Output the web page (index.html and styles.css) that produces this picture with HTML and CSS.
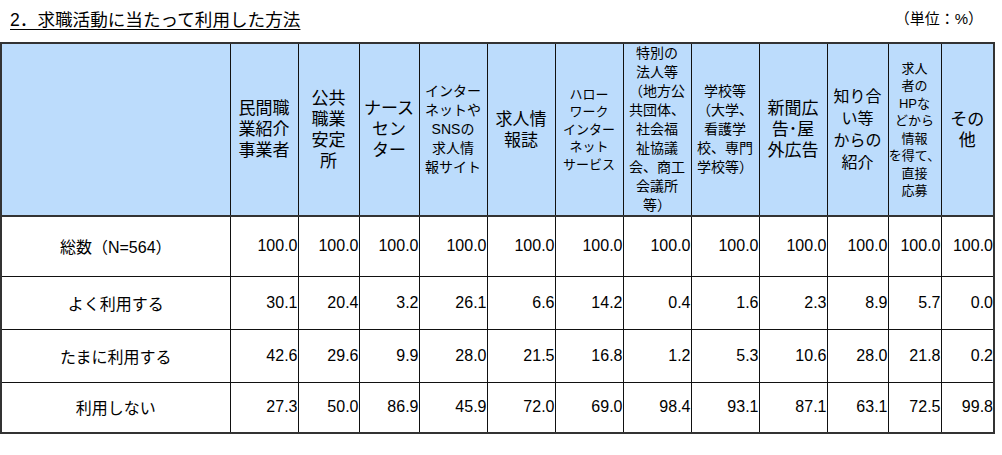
FILE: index.html
```html
<!DOCTYPE html>
<html lang="ja">
<head>
<meta charset="utf-8">
<title>求職活動に当たって利用した方法</title>
<link rel="stylesheet" href="styles.css">
</head>
<body>
<div class="page">
  <div class="top">
    <h1 class="title">2．求職活動に当たって利用した方法</h1>
    <div class="unit">（単位：%）</div>
  </div>
  <table class="grid">
    <colgroup>
      <col class="c-label">
      <col class="c68"><col class="c61"><col class="c60"><col class="c68"><col class="c68"><col class="c68"><col class="c68"><col class="c68"><col class="c68"><col class="c61"><col class="c53"><col class="c53">
    </colgroup>
    <thead>
      <tr class="head">
        <th></th>
        <th class="f17">民間職<br>業紹介<br>事業者</th>
        <th class="f17">公共<br>職業<br>安定<br>所</th>
        <th class="f17">ナース<br>セン<br>ター</th>
        <th class="f14">インター<br>ネットや<br>SNSの<br>求人情<br>報サイト</th>
        <th class="f17">求人情<br>報誌</th>
        <th class="f13">ハロー<br>ワーク<br>インター<br>ネット<br>サービス</th>
        <th class="f14">特別の<br>法人等<br>（地方公<br>共団体、<br>社会福<br>祉協議<br>会、商工<br>会議所<br>等）</th>
        <th class="f14">学校等<br>（大学、<br>看護学<br>校、専門<br>学校等）</th>
        <th class="f17">新聞広<br>告･屋<br>外広告</th>
        <th class="f16">知り合<br>い等<br>からの<br>紹介</th>
        <th class="f13">求人<br>者の<br>HPな<br>どから<br>情報<br>を得て、<br>直接<br>応募</th>
        <th class="f17">その<br>他</th>
      </tr>
    </thead>
    <tbody>
      <tr class="r1">
        <th>総数（N=564）</th>
        <td>100.0</td><td>100.0</td><td>100.0</td><td>100.0</td><td>100.0</td><td>100.0</td><td>100.0</td><td>100.0</td><td>100.0</td><td>100.0</td><td>100.0</td><td>100.0</td>
      </tr>
      <tr class="r2">
        <th>よく利用する</th>
        <td>30.1</td><td>20.4</td><td>3.2</td><td>26.1</td><td>6.6</td><td>14.2</td><td>0.4</td><td>1.6</td><td>2.3</td><td>8.9</td><td>5.7</td><td>0.0</td>
      </tr>
      <tr class="r3">
        <th>たまに利用する</th>
        <td>42.6</td><td>29.6</td><td>9.9</td><td>28.0</td><td>21.5</td><td>16.8</td><td>1.2</td><td>5.3</td><td>10.6</td><td>28.0</td><td>21.8</td><td>0.2</td>
      </tr>
      <tr class="r4">
        <th>利用しない</th>
        <td>27.3</td><td>50.0</td><td>86.9</td><td>45.9</td><td>72.0</td><td>69.0</td><td>98.4</td><td>93.1</td><td>87.1</td><td>63.1</td><td>72.5</td><td>99.8</td>
      </tr>
    </tbody>
  </table>
</div>
</body>
</html>
```

FILE: styles.css
```css
html, body {
  margin: 0;
  padding: 0;
  background: #ffffff;
}

body {
  font-family: "Liberation Sans", "Noto Sans CJK JP", sans-serif;
  color: #000000;
  width: 1002px;
  height: 455px;
  overflow: hidden;
}

.top {
  display: flex;
  justify-content: space-between;
  align-items: flex-end;
  height: 42px;
  box-sizing: border-box;
  padding: 0 19px 12px 10px;
}

.title {
  margin: 0;
  font-size: 17.6px;
  font-weight: normal;
  line-height: 20px;
  text-decoration: underline;
  text-underline-offset: 3px;
  text-decoration-thickness: 1px;
}

.unit {
  font-size: 15px;
  line-height: 18px;
  padding-bottom: 2px;
}

.grid {
  border-collapse: collapse;
  table-layout: fixed;
  width: 995px;
  border: 2px solid #333333;
}

.c-label { width: 229px; }
.c68 { width: 68px; }
.c61 { width: 61px; }
.c60 { width: 60px; }
.c53 { width: 53px; }

.grid th,
.grid td {
  border: 1px solid #111111;
  padding: 0;
  font-weight: normal;
}

.head { height: 173px; }

.head th {
  background: #bcdcfc;
  text-align: center;
  vertical-align: middle;
  border-bottom: 2px solid #333333;
  white-space: nowrap;
  overflow: hidden;
}

.f17 { font-size: 17px; line-height: 21px; }
.f16 { font-size: 16px; line-height: 22px; }
.f14 { font-size: 14px; line-height: 19px; }
.f13 { font-size: 13px; line-height: 17.5px; }

tbody th {
  font-size: 16px;
  text-align: center;
  vertical-align: middle;
  padding-top: 4px;
}

tbody td {
  font-size: 16px;
  text-align: right;
  vertical-align: middle;
  padding: 4px 4px 0 0;
}

.r1 { height: 60px; }
.r2 { height: 53px; }
.r3 { height: 53px; }
.r4 { height: 51px; }
```
